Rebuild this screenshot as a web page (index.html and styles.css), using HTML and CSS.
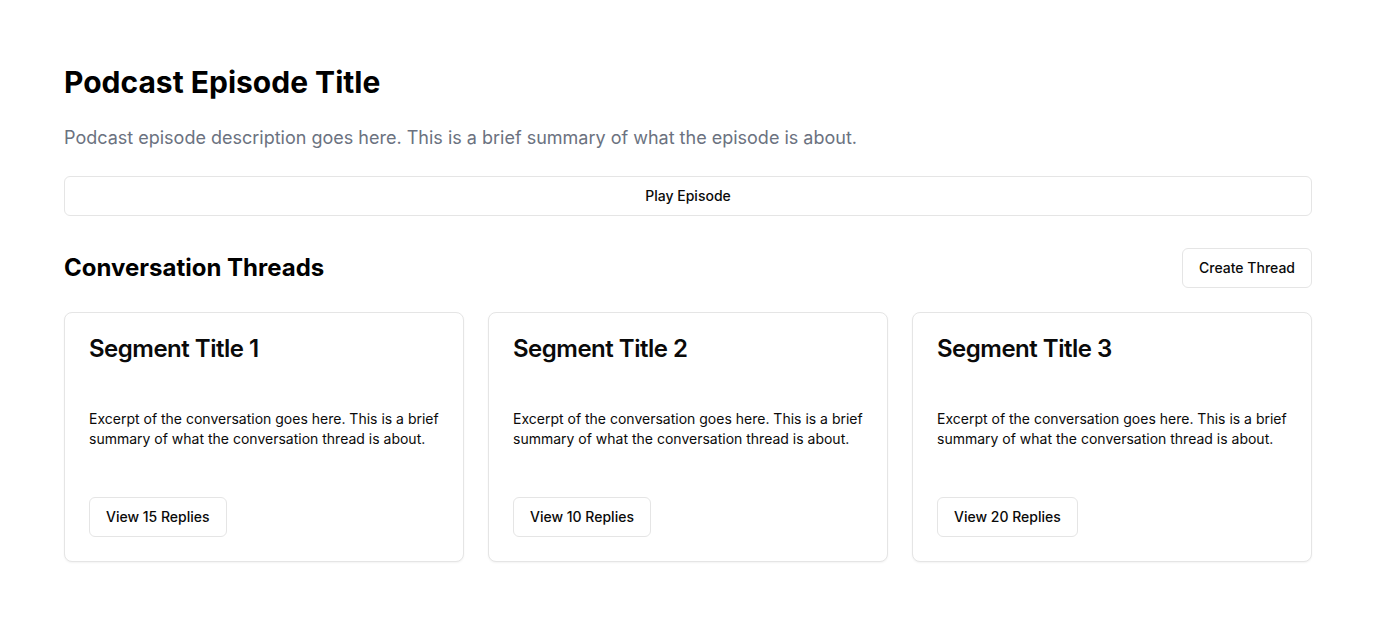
FILE: index.html
```html
<!DOCTYPE html>
<html lang="en">
<head>
<meta charset="utf-8">
<title>Podcast Episode</title>
<link rel="stylesheet" href="styles.css">
</head>
<body>
<main class="page">
  <h1 class="title">Podcast Episode Title</h1>
  <p class="description">Podcast episode description goes here. This is a brief summary of what the episode is about.</p>
  <button class="btn btn-full">Play Episode</button>

  <div class="section-head">
    <h2 class="section-title">Conversation Threads</h2>
    <button class="btn">Create Thread</button>
  </div>

  <div class="cards">
    <div class="card">
      <div class="card-header"><h3 class="card-title">Segment Title 1</h3></div>
      <div class="card-content"><p>Excerpt of the conversation goes here. This is a brief summary of what the conversation thread is about.</p></div>
      <div class="card-footer"><button class="btn">View 15 Replies</button></div>
    </div>
    <div class="card">
      <div class="card-header"><h3 class="card-title">Segment Title 2</h3></div>
      <div class="card-content"><p>Excerpt of the conversation goes here. This is a brief summary of what the conversation thread is about.</p></div>
      <div class="card-footer"><button class="btn">View 10 Replies</button></div>
    </div>
    <div class="card">
      <div class="card-header"><h3 class="card-title">Segment Title 3</h3></div>
      <div class="card-content"><p>Excerpt of the conversation goes here. This is a brief summary of what the conversation thread is about.</p></div>
      <div class="card-footer"><button class="btn">View 20 Replies</button></div>
    </div>
  </div>
</main>
</body>
</html>
```
FILE: styles.css
```css
* { box-sizing: border-box; }
html, body { margin: 0; padding: 0; background: #fff; }
body {
  font-family: Inter, "Noto Sans", sans-serif;
  color: #0a0a0a;
}
.page {
  padding: 64px;
}
.title {
  margin: 0 0 24px;
  font-size: 30px;
  line-height: 36px;
  font-weight: 700;
  color: #000;
}
.description {
  margin: 0 0 24px;
  font-size: 18px;
  line-height: 28px;
  color: #6b7280;
}
.btn {
  font-family: inherit;
  height: 40px;
  padding: 0 16px;
  font-size: 14px;
  line-height: 20px;
  font-weight: 500;
  color: #0a0a0a;
  background: #fff;
  border: 1px solid #e5e5e5;
  border-radius: 6px;
  display: inline-flex;
  align-items: center;
  justify-content: center;
}
.btn-full { width: 100%; display: flex; }
.section-head {
  margin-top: 32px;
  margin-bottom: 24px;
  display: flex;
  justify-content: space-between;
  align-items: center;
}
.section-title {
  margin: 0;
  font-size: 24px;
  line-height: 32px;
  font-weight: 700;
  color: #000;
}
.cards {
  display: grid;
  grid-template-columns: repeat(3, 1fr);
  gap: 24px;
}
.card {
  border: 1px solid #e5e5e5;
  border-radius: 8px;
  background: #fff;
  box-shadow: 0 1px 2px rgba(0,0,0,0.05);
}
.card-header { padding: 24px; }
.card-title {
  margin: 0;
  font-size: 24px;
  line-height: 24px;
  font-weight: 600;
  letter-spacing: -0.5px;
}
.card-content { padding: 24px; }
.card-content p {
  margin: 0;
  font-size: 14px;
  line-height: 20px;
}
.card-footer { padding: 24px; display: flex; }
```
